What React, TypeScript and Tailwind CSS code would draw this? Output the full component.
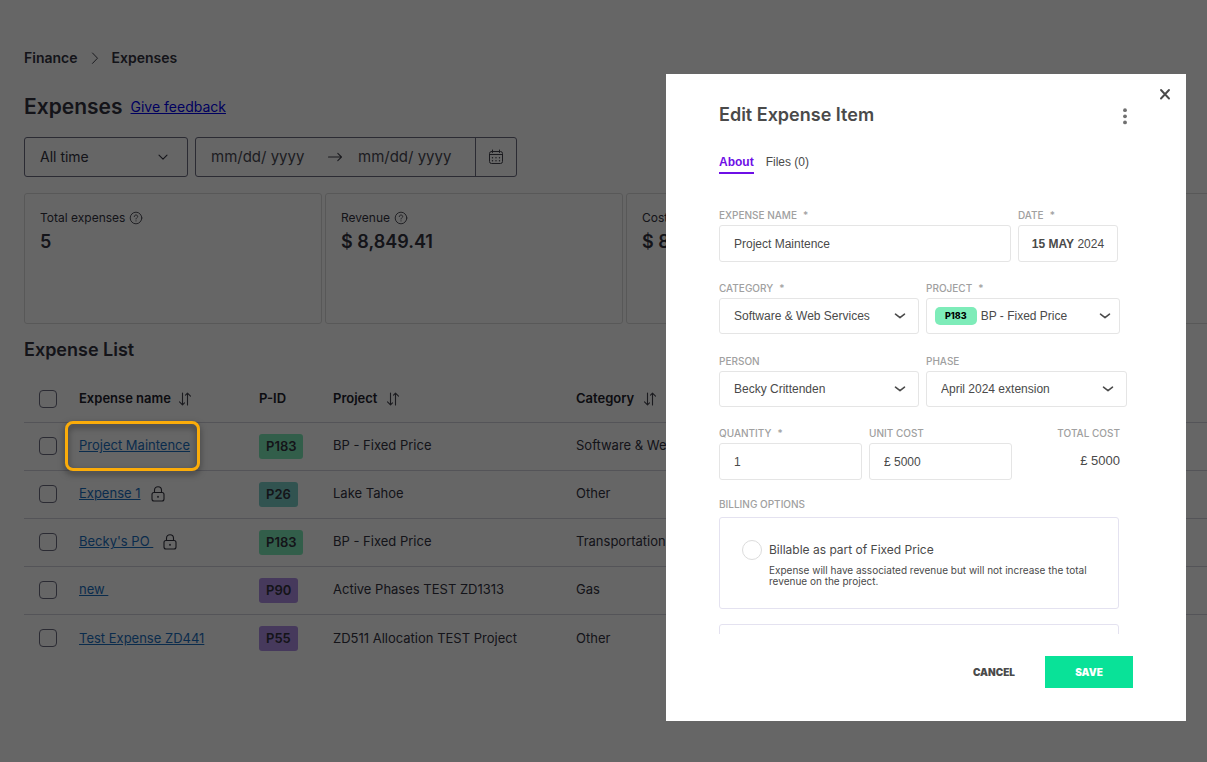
import type { ReactNode } from "react";
import clsx from "clsx";

interface Expense {
  name: string;
  locked?: boolean;
  active?: boolean;
  pid: string;
  color: "green" | "teal" | "purple";
  project: string;
  category: string;
}

const EXPENSES: Expense[] = [
  { name: "Project Maintence", active: true, pid: "P183", color: "green", project: "BP - Fixed Price", category: "Software & Web Services" },
  { name: "Expense 1", locked: true, pid: "P26", color: "teal", project: "Lake Tahoe", category: "Other" },
  { name: "Becky's PO\u00a0", locked: true, pid: "P183", color: "green", project: "BP - Fixed Price", category: "Transportation" },
  { name: "new\u00a0", pid: "P90", color: "purple", project: "Active Phases TEST ZD1313", category: "Gas" },
  { name: "Test Expense ZD441", pid: "P55", color: "purple", project: "ZD511 Allocation TEST Project", category: "Other" },
];

const BADGE = {
  green: "bg-[#7eecb9]",
  teal: "bg-[#7ad0c8]",
  purple: "bg-[#b08fe6]",
};

const STATS = [
  { label: "Total expenses", value: "5" },
  { label: "Revenue", value: "$ 8,849.41" },
  { label: "Cost", value: "$ 8,849.41" },
  { label: "Profit", value: "$ 0.00" },
];

function Icon({ className, viewBox, children }: { className: string; viewBox: string; children: ReactNode }) {
  return (
    <svg
      className={clsx("shrink-0", className)}
      viewBox={viewBox}
      fill="none"
      stroke="currentColor"
      strokeLinecap="round"
      strokeLinejoin="round"
      aria-hidden="true"
    >
      {children}
    </svg>
  );
}

function SortIcon() {
  return (
    <Icon className="w-4 h-4 text-[#44444e]" viewBox="0 0 16 16">
      <path d="M5.500 2v11.500M2.500 10.800l3 3 M5.500 13.800l2-2M10.500 14V2.500M8.500 4.200l2-2M10.500 2.200l3 3" strokeWidth="1.100" />
    </Icon>
  );
}

function LockIcon() {
  return (
    <Icon className="w-3.5 h-4" viewBox="0 0 14 16">
      <rect x="1" y="6.5" width="12" height="8.5" rx="2" strokeWidth="1.100" />
      <path d="M3.5 6.5V4.200a3.500 3.500 0 0 1 7 0v2.300" strokeWidth="1.100" />
      <path d="M7 10.500v.6" strokeWidth="1.600" />
    </Icon>
  );
}

function HelpIcon() {
  return (
    <Icon className="w-3.5 h-3.5 text-[#44444e]" viewBox="0 0 14 14">
      <circle cx="7" cy="7" r="5.800" strokeWidth="0.900" />
      <path d="M5.300 5.600c0-1 .8-1.600 1.700-1.600s1.700.6 1.700 1.500c0 1.200-1.700 1.200-1.700 2.500M7 9.800v.2" strokeWidth="0.900" />
    </Icon>
  );
}

function CalendarIcon() {
  return (
    <Icon className="w-4 h-4 text-[#44444e]" viewBox="0 0 16 16">
      <rect x="1.500" y="2.500" width="13" height="12" rx="2" strokeWidth="1" />
      <path d="M1.500 5.500h13M4.500 1v2.500M11.500 1v2.500" strokeWidth="1" />
      <path d="M4.500 8.800h.01M8 8.800h.01M11.500 8.800h.01M4.500 11.800h.01M8 11.800h.01M11.500 11.800h.01" strokeWidth="1.400" />
    </Icon>
  );
}

function Chevron() {
  return (
    <Icon className="w-3 h-3 pointer-events-none" viewBox="0 0 12 12">
      <path d="M1.500 4.200 6 7.600l4.500-3.400" strokeWidth="1.600" />
    </Icon>
  );
}

function Checkbox({ label }: { label: string }) {
  return (
    <input
      type="checkbox"
      aria-label={label}
      className="block ml-[15px] w-[18px] h-[18px] appearance-none rounded-[4px] border border-[#6b6b80]"
    />
  );
}

const LABEL = "font-['Inter',sans-serif] text-[10px] leading-4 font-medium text-[#a0a0a0] uppercase";

function Field({ label, htmlFor, required, className, children }: {
  label: string;
  htmlFor: string;
  required?: boolean;
  className?: string;
  children: ReactNode;
}) {
  return (
    <div className={className}>
      <label htmlFor={htmlFor} className={clsx(LABEL, "block mb-0.5")}>
        {label}
        {required && <span className="ml-1.5">*</span>}
      </label>
      {children}
    </div>
  );
}

const BOX = "rounded-[3px] border border-[#e5e5e5] text-xs text-[#4a4a4a]";

function Select({ id, value }: { id: string; value: string }) {
  return (
    <div className={clsx(BOX, "flex h-9 items-center pl-[14px] pr-3")}>
      <select id={id} className="flex-1 min-w-0 appearance-none bg-transparent outline-none">
        <option>{value}</option>
      </select>
      <Chevron />
    </div>
  );
}

function ExpensesPage() {
  return (
    <main className="min-h-screen overflow-hidden bg-white pl-6 pt-12 font-['Inter',sans-serif] text-[#33333f]">
      <nav aria-label="Breadcrumb" className="flex items-center gap-3 text-sm font-semibold">
        <a href="#finance">Finance</a>
        <Icon className="w-2.5 h-3 text-[#44444e]" viewBox="0 0 10 12">
          <path d="m2.500 1 5 5.200-5 5.200" strokeWidth="1" />
        </Icon>
        <a href="#expenses">Expenses</a>
      </nav>

      <div className="mt-[25px] flex items-center gap-2">
        <h1 className="text-[21px] leading-7 font-semibold">Expenses</h1>
        <a href="#feedback" className="text-sm text-[#0000ee] underline">Give feedback</a>
      </div>

      <div className="mt-4 flex gap-[7px] text-sm">
        <div className="flex h-10 w-[164px] items-center rounded-[3px] border border-[#6b6b80] pl-[15px] pr-[18px]">
          <select aria-label="Period" className="flex-1 appearance-none bg-transparent outline-none">
            <option>All time</option>
          </select>
          <Icon className="w-3 h-3" viewBox="0 0 12 12">
            <path d="m2 4.200 4 4 4-4" strokeWidth="1.100" />
          </Icon>
        </div>
        <div className="flex h-10 w-[322px] items-center rounded-[3px] border border-[#6b6b80] text-[15px]">
          <input aria-label="Start date" placeholder="mm/dd/ yyyy" className="ml-[15px] w-[104px] outline-none placeholder:text-[#4a4a54]" />
          <Icon className="ml-3 w-4 h-4 text-[#44444e]" viewBox="0 0 16 16">
            <path d="M1.500 8h13M10.800 4.300 14.500 8l-3.700 3.700" strokeWidth="1.100" />
          </Icon>
          <input aria-label="End date" placeholder="mm/dd/ yyyy" className="ml-[15px] min-w-0 flex-1 outline-none placeholder:text-[#4a4a54]" />
          <button type="button" aria-label="Open calendar" className="flex h-full w-[41px] items-center justify-center border-l border-[#6b6b80]">
            <CalendarIcon />
          </button>
        </div>
      </div>

      <section className="mt-4 flex gap-[3px]">
        {STATS.map((stat) => (
          <div key={stat.label} className="h-[131px] w-[298px] shrink-0 rounded-[3px] border border-[#dcdcdc] px-[15px] pt-3.5">
            <h2 className="flex items-center gap-1 text-xs leading-5">
              {stat.label}
              <HelpIcon />
            </h2>
            <p className="text-lg leading-7 font-semibold">{stat.value}</p>
          </div>
        ))}
      </section>

      <h2 className="mt-3 text-lg leading-7 font-semibold">Expense List</h2>
      <table className="mt-3 w-full table-fixed border-collapse text-left text-[13px]">
        <colgroup>
          <col className="w-[55px]" />
          <col className="w-[180px]" />
          <col className="w-[74px]" />
          <col className="w-[243px]" />
          <col />
        </colgroup>
        <thead>
          <tr className="h-[46px] text-[#22222c]">
            <th><Checkbox label="Select all" /></th>
            <th><span className="flex items-center gap-1.5 font-semibold">Expense name <SortIcon /></span></th>
            <th className="font-semibold">P-ID</th>
            <th><span className="flex items-center gap-2 font-semibold">Project <SortIcon /></span></th>
            <th><span className="flex items-center gap-2 font-semibold">Category <SortIcon /></span></th>
          </tr>
        </thead>
        <tbody>
          {EXPENSES.map((e) => (
            <tr key={e.name} className="h-12 border-t border-[#d3d3dc]">
              <td><Checkbox label={`Select ${e.name}`} /></td>
              <td>
                <div className="flex items-center gap-2.5">
                  <a href="#expense" className="relative text-[#1b6fc0] underline">
                    {e.name}
                    {e.active && (
                      <span className="absolute -left-3.5 -right-2.5 -inset-y-[15px] z-20 rounded-lg border-3 border-[#fbac09] drop-shadow-[0_3px_3px_rgba(0,0,0,0.5)]" />
                    )}
                  </a>
                  {e.locked && <LockIcon />}
                </div>
              </td>
              <td>
                <span className={clsx("inline-block rounded-[3px] px-[7px] leading-[25px] font-semibold", BADGE[e.color])}>{e.pid}</span>
              </td>
              <td>{e.project}</td>
              <td>{e.category}</td>
            </tr>
          ))}
        </tbody>
      </table>
    </main>
  );
}

function EditExpenseModal() {
  return (
    <div
      role="dialog"
      aria-labelledby="modal-title"
      className="relative w-[520px] bg-white px-[53px] pt-[27px] pb-[33px] font-['Liberation_Sans',Arial,sans-serif] text-[#4a4a4a]"
    >
      <button type="button" aria-label="Close" className="absolute top-3 right-[13px]">
        <Icon className="w-4 h-4" viewBox="0 0 16 16">
          <path d="m4 4 8 8.500M12 4l-8 8.500" strokeWidth="1.900" />
        </Icon>
      </button>

      <div className="flex items-center justify-between">
        <h2 id="modal-title" className="font-['Inter',sans-serif] text-lg leading-7 font-semibold">Edit Expense Item</h2>
        <button type="button" aria-label="More options">
          <svg className="w-4 h-5" viewBox="0 0 16 20" fill="#707070" aria-hidden="true">
            <circle cx="8" cy="5.200" r="1.900" />
            <circle cx="8" cy="11.300" r="1.900" />
            <circle cx="8" cy="17.400" r="1.900" />
          </svg>
        </button>
      </div>

      <div role="tablist" className="mt-[23px] flex gap-3 text-xs leading-5">
        <button type="button" role="tab" aria-selected="true" className="border-b-2 border-[#6e0fe6] font-bold text-[#6e0fe6]">About</button>
        <button type="button" role="tab" aria-selected="false" className="border-b-2 border-transparent">Files (0)</button>
      </div>

      <form className="mt-[33px] h-[427px] overflow-hidden">
        <div className="flex gap-[7px]">
          <Field label="Expense name" htmlFor="name" required className="w-[292px]">
            <input id="name" defaultValue="Project Maintence" className={clsx(BOX, "h-[37px] w-full px-[14px]")} />
          </Field>
          <Field label="Date" htmlFor="date" required className="w-[100px]">
            <button id="date" type="button" className={clsx(BOX, "h-[37px] w-full whitespace-nowrap")}>
              <b>15 MAY</b> 2024
            </button>
          </Field>
        </div>

        <div className="mt-[18px] flex gap-[7px]">
          <Field label="Category" htmlFor="category" required className="w-[200px]">
            <Select id="category" value="Software & Web Services" />
          </Field>
          <Field label="Project" htmlFor="project" required className="w-[194px]">
            <div className={clsx(BOX, "flex h-9 items-center gap-1 px-2")}>
              <span className="rounded-[5px] bg-[#7eecb9] px-2.5 font-['Inter',sans-serif] text-[9px] leading-[18px] font-extrabold text-black">P183</span>
              <select id="project" className="flex-1 min-w-0 appearance-none bg-transparent outline-none">
                <option>BP - Fixed Price</option>
              </select>
              <Chevron />
            </div>
          </Field>
        </div>

        <div className="mt-[19px] flex gap-[7px]">
          <Field label="Person" htmlFor="person" className="w-[200px]">
            <Select id="person" value="Becky Crittenden" />
          </Field>
          <Field label="Phase" htmlFor="phase" className="w-[201px]">
            <Select id="phase" value="April 2024 extension" />
          </Field>
        </div>

        <div className="mt-[18px] flex gap-[7px]">
          <Field label="Quantity" htmlFor="quantity" required className="w-[143px]">
            <input id="quantity" defaultValue="1" className={clsx(BOX, "h-[37px] w-full px-[14px]")} />
          </Field>
          <Field label="Unit cost" htmlFor="unit-cost" className="w-[143px]">
            <input id="unit-cost" defaultValue="£ 5000" className={clsx(BOX, "h-[37px] w-full px-[14px]")} />
          </Field>
          <Field label="Total cost" htmlFor="total-cost" className="w-[101px] text-right">
            <output id="total-cost" className="block text-[13px] leading-9">£ 5000</output>
          </Field>
        </div>

        <fieldset className="mt-4 w-[400px]">
          <legend className={clsx(LABEL, "mb-[5px]")}>Billing options</legend>
          <div className="h-[92px] rounded-[3px] border border-[#e4e2f0] pl-[22px] pr-6 pt-[22px] font-['Inter',sans-serif]">
            <div className="flex items-center gap-[7px]">
              <input type="radio" id="billable" name="billing" className="w-5 h-5 appearance-none rounded-full border border-[#dcdcdc]" />
              <label htmlFor="billable" className="text-xs leading-5">Billable as part of Fixed Price</label>
            </div>
            <p className="mt-[5px] pl-[27px] text-[10px] leading-[11px]">
              Expense will have associated revenue but will not increase the total revenue on the project.
            </p>
          </div>
          <div className="mt-[15px] h-[92px] rounded-[3px] border border-[#e4e2f0]" />
        </fieldset>
      </form>

      <div className="mt-[22px] flex items-center justify-end gap-[30px] font-['Inter',sans-serif] text-[10px] font-black">
        <button type="button">CANCEL</button>
        <button type="button" className="h-8 w-[88px] bg-[#09e298] text-white">SAVE</button>
      </div>
    </div>
  );
}

export default function App() {
  return (
    <>
      <ExpensesPage />
      <div className="fixed inset-0 z-10 bg-black/60" />
      <div className="fixed inset-0 z-30 flex items-start justify-end pt-[74px] pr-[21px]">
        <EditExpenseModal />
      </div>
    </>
  );
}
